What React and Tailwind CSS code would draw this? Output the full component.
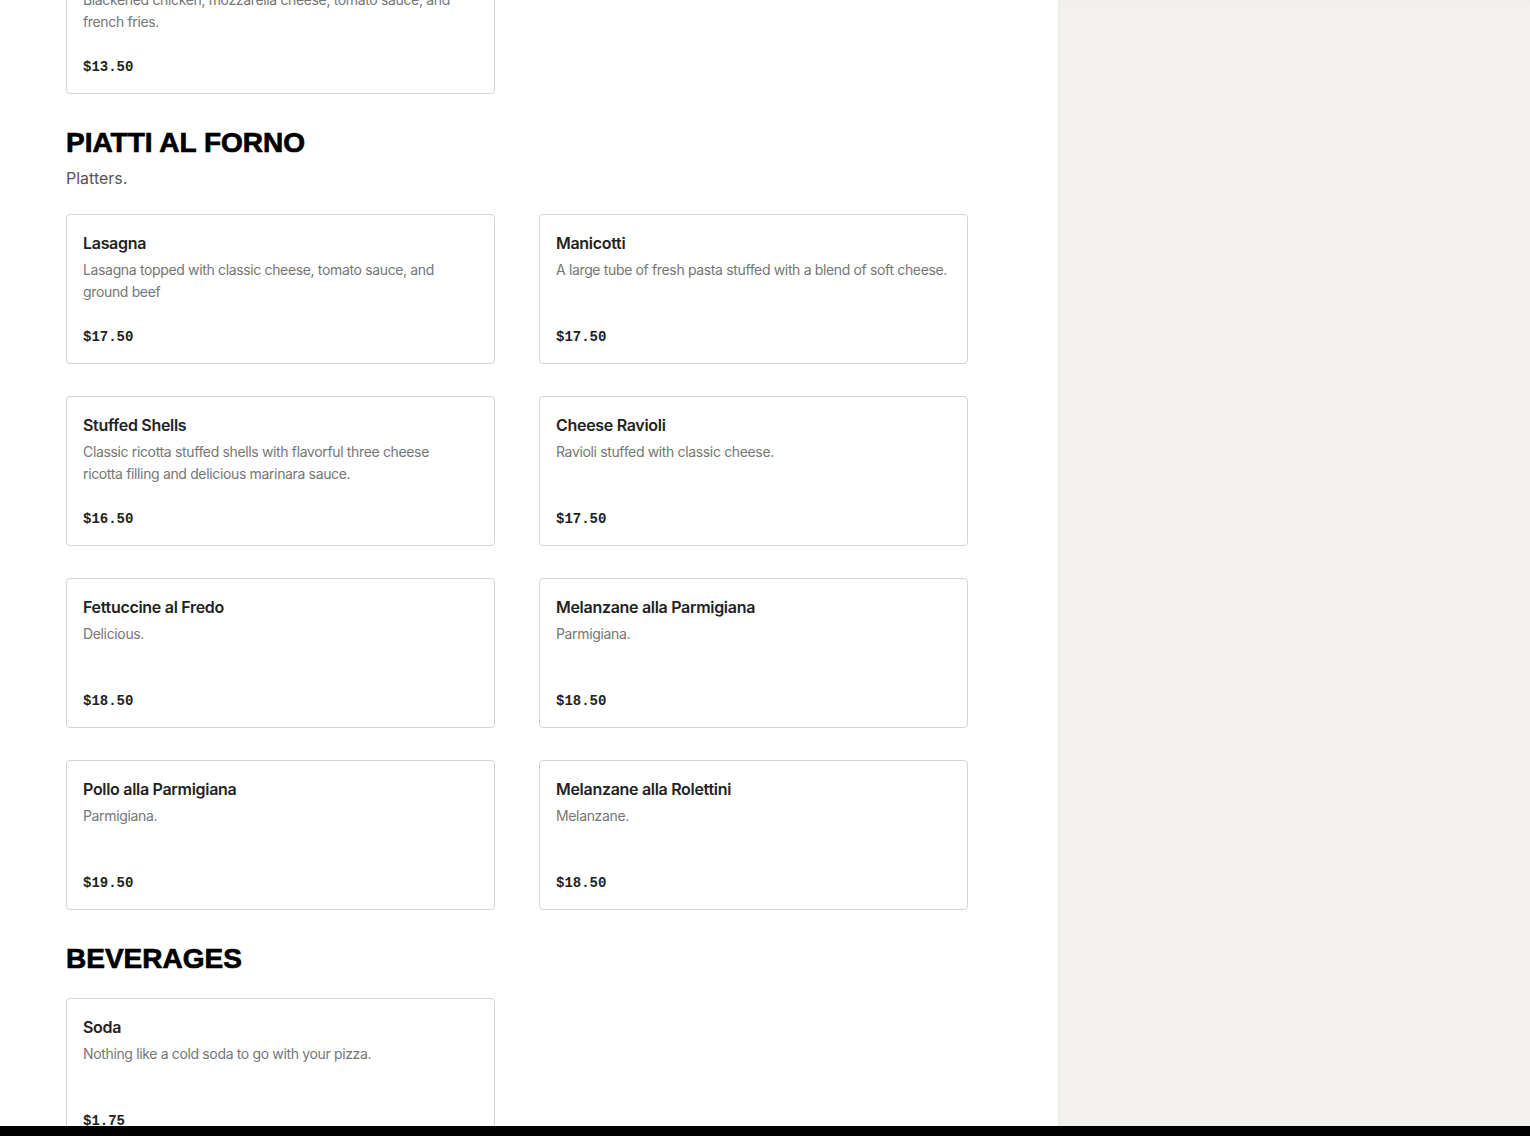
import React from 'react';

const sections = [
  {
    title: 'PIATTI AL FORNO',
    subtitle: 'Platters.',
    items: [
      { name: 'Lasagna', desc: 'Lasagna topped with classic cheese, tomato sauce, and ground beef', price: '$17.50' },
      { name: 'Manicotti', desc: 'A large tube of fresh pasta stuffed with a blend of soft cheese.', price: '$17.50' },
      { name: 'Stuffed Shells', desc: 'Classic ricotta stuffed shells with flavorful three cheese\nricotta filling and delicious marinara sauce.', price: '$16.50' },
      { name: 'Cheese Ravioli', desc: 'Ravioli stuffed with classic cheese.', price: '$17.50' },
      { name: 'Fettuccine al Fredo', desc: 'Delicious.', price: '$18.50' },
      { name: 'Melanzane alla Parmigiana', desc: 'Parmigiana.', price: '$18.50' },
      { name: 'Pollo alla Parmigiana', desc: 'Parmigiana.', price: '$19.50' },
      { name: 'Melanzane alla Rolettini', desc: 'Melanzane.', price: '$18.50' },
    ],
  },
  {
    title: 'BEVERAGES',
    items: [
      { name: 'Soda', desc: 'Nothing like a cold soda to go with your pizza.', price: '$1.75' },
    ],
  },
];

const MenuCard = ({ item }) => (
  <div className="h-[150px] border border-[#d4d4d4] rounded-[4px] bg-white px-4 pt-4">
    <h3 className="text-[16px] leading-6 font-semibold tracking-[-0.3px] text-[#222222]">{item.name}</h3>
    <p className="mt-1 min-h-[44px] whitespace-pre-line text-[14px] leading-[22px] tracking-[-0.35px] text-[#767676]">{item.desc}</p>
    <p className="mt-6 text-[14px] leading-5 font-bold text-[#222222] font-['Liberation_Mono',monospace]">{item.price}</p>
  </div>
);

export default function App() {
  return (
    <div className="h-[1136px] flex flex-col overflow-hidden font-['Inter',sans-serif]">
      <div className="flex-1 flex min-h-0">
        <main className="w-[1058px] bg-white overflow-hidden">
          <div className="-mt-[56px] pl-[66px]">
            <div className="grid grid-cols-[429px_429px] gap-x-[44px]">
              <MenuCard item={{ name: 'Chicken Parmigiana Sub', desc: 'Blackened chicken, mozzarella cheese, tomato sauce, and french fries.', price: '$13.50' }} />
            </div>
            {sections.map((section) => (
              <section key={section.title} className="mt-[31px]">
                <h2 className="text-[28px] leading-9 font-bold text-black font-['Liberation_Sans',sans-serif] [-webkit-text-stroke:0.7px_black]">
                  {section.title}
                </h2>
                {section.subtitle ? (
                  <p className="mt-[5px] mb-6 text-[16px] leading-6 text-[#555555]">{section.subtitle}</p>
                ) : (
                  <div className="h-[21px]" />
                )}
                <div className="grid grid-cols-[429px_429px] gap-x-[44px] gap-y-8">
                  {section.items.map((item) => (
                    <MenuCard key={item.name} item={item} />
                  ))}
                </div>
              </section>
            ))}
          </div>
        </main>
        <aside className="flex-1 bg-[#f2f1ed] shadow-[inset_2px_0_3px_rgba(0,0,0,0.03)]" />
      </div>
      <div className="h-[10px] bg-black" />
    </div>
  );
}
